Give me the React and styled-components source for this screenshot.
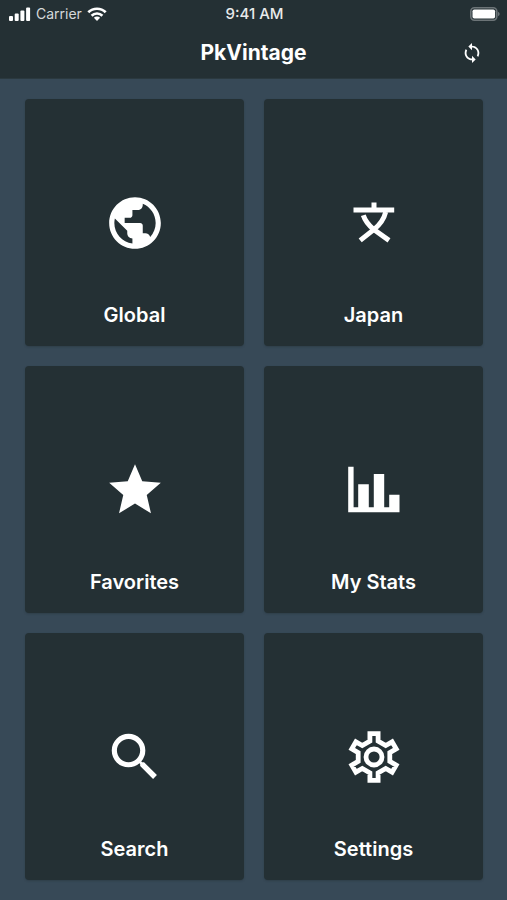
import React from 'react';
import styled, { createGlobalStyle } from 'styled-components';
import { MdPublic, MdStar, MdSearch, MdSync } from 'react-icons/md';

const GlobalStyle = createGlobalStyle`
  body {
    margin: 0;
    background: #374957;
    font-family: 'Inter', 'Liberation Sans', sans-serif;
  }
`;

const Container = styled.div`
  min-height: 100vh;
  display: flex;
  flex-direction: column;
  background: #374957;
  color: #fff;
`;

// Header

const Header = styled.header`
  background: #243034;
  border-bottom: 1px solid #2b393f;
`;

const StatusBar = styled.div`
  display: grid;
  grid-template-columns: 1fr auto 1fr;
  align-items: center;
  height: 28px;
  padding: 0 7px 0 9px;
  font-size: 14px;
  line-height: 20px;
`;

const Carrier = styled.div`
  display: flex;
  align-items: center;
  gap: 5px;
  color: #d5d9da;
`;

const Time = styled.time`
  font-size: 15px;
  font-weight: 500;
  color: #e8eaeb;
`;

const Battery = styled.div`
  display: flex;
  justify-content: flex-end;
`;

const TitleBar = styled.div`
  display: grid;
  grid-template-columns: 1fr auto 1fr;
  align-items: center;
  height: 50px;
  padding: 0 24px;
`;

const Title = styled.h1`
  grid-column: 2;
  margin: 0;
  font-size: 21px;
  font-weight: 700;
  line-height: 24px;
`;

const SyncButton = styled.button`
  justify-self: end;
  display: flex;
  padding: 0;
  border: 0;
  background: none;
  color: #fff;
  font-size: 22px;
  cursor: pointer;
`;

// Menu

const Menu = styled.main`
  flex: 1;
  display: grid;
  grid-template-columns: 1fr 1fr;
  grid-auto-rows: 1fr;
  gap: 20px;
  padding: 20px 24px 20px 25px;
`;

const Card = styled.button`
  display: grid;
  grid-template-rows: 1fr auto 1fr;
  justify-items: center;
  padding: 0;
  border: 0;
  border-radius: 4px;
  background: #243034;
  box-shadow: 0 1px 2px rgba(36, 48, 52, 0.4);
  color: #fff;
  font-family: inherit;
  cursor: pointer;

  svg {
    grid-row: 2;
    width: 62px;
    height: 62px;
  }
`;

const Label = styled.span`
  grid-row: 3;
  padding-top: 49px;
  font-size: 20px;
  font-weight: 600;
  line-height: 24px;
`;

const SignalIcon = () => (
  <svg width="22" height="14" viewBox="0 0 22 14" fill="#fff" aria-hidden="true">
    <rect x="0" y="9" width="4" height="5" rx="1" />
    <rect x="5.7" y="6.5" width="4" height="7.5" rx="1" />
    <rect x="11.4" y="3.5" width="4" height="10.5" rx="1" />
    <rect x="17.1" y="0.5" width="4" height="13.5" rx="1" />
  </svg>
);

const WifiIcon = () => (
  <svg width="20" height="14" viewBox="0 0 20 14" aria-hidden="true">
    <g fill="none" stroke="#fff" strokeWidth="2.7">
      <path d="M1.3 5.3a12.4 12.4 0 0 1 17.4 0" />
      <path d="M4.6 8.7a7.7 7.7 0 0 1 10.8 0" />
    </g>
    <path fill="#fff" d="M10 13.9 6.9 10.8a4.4 4.4 0 0 1 6.2 0z" />
  </svg>
);

const BatteryIcon = () => (
  <svg width="30" height="14" viewBox="0 0 30 14" aria-hidden="true">
    <rect x="0.8" y="0.8" width="26" height="12.4" rx="3.6" fill="none" stroke="#6c7477" strokeWidth="1.6" />
    <rect x="2.5" y="2.5" width="22.6" height="9" rx="1.8" fill="#fff" />
    <path d="M28 4.7q1.7.7 1.7 2.3T28 9.3z" fill="#6c7477" />
  </svg>
);

const JapanIcon = () => (
  <svg viewBox="0 0 62 62" aria-hidden="true">
    <path fill="currentColor" d="M28.5 10.5h5v5h17.7v5H10.5v-5h18z" />
    <g fill="none" stroke="currentColor" strokeWidth="5">
      <path d="M20.3 23.2C22 28.5 25.5 33 30.8 37.6L46 48.4" />
      <path d="M42.7 20C41 27 37 32.7 30.8 37.6L17.2 48.4" />
    </g>
  </svg>
);

const StatsIcon = () => (
  <svg viewBox="0 0 62 62" aria-hidden="true">
    <path
      fill="currentColor"
      d="M5.2 7.7h5.4v40.6h4.6v-23h10.6v23h5V15h10.4v33.3h5V35.7h10.3v17.6H5.2z"
    />
  </svg>
);

const SettingsIcon = () => (
  <svg viewBox="-31 -31 62 62" aria-hidden="true">
    <g fill="none" stroke="currentColor" strokeWidth="4.8">
      <path
        d="M-4.1-15.9-4.1-23.3 4.1-23.3 4.1-15.9 11.7-11.5 18.1-15.2 22.2-8.1 15.8-4.4
          15.8 4.4 22.2 8.1 18.1 15.2 11.7 11.5 4.1 15.9 4.1 23.3-4.1 23.3-4.1 15.9
          -11.7 11.5-18.1 15.2-22.2 8.1-15.8 4.4-15.8-4.4-22.2-8.1-18.1-15.2-11.7-11.5z"
      />
      <circle r="8" />
    </g>
  </svg>
);

const menuItems = [
  { name: 'Global', Icon: MdPublic },
  { name: 'Japan', Icon: JapanIcon },
  { name: 'Favorites', Icon: MdStar },
  { name: 'My Stats', Icon: StatsIcon },
  { name: 'Search', Icon: MdSearch },
  { name: 'Settings', Icon: SettingsIcon },
];

function App() {
  return (
    <Container>
      <GlobalStyle />
      <Header>
        <StatusBar>
          <Carrier>
            <SignalIcon />
            Carrier
            <WifiIcon />
          </Carrier>
          <Time>9:41 AM</Time>
          <Battery>
            <BatteryIcon />
          </Battery>
        </StatusBar>
        <TitleBar>
          <Title>PkVintage</Title>
          <SyncButton type="button" aria-label="Sync">
            <MdSync />
          </SyncButton>
        </TitleBar>
      </Header>
      <Menu>
        {menuItems.map(({ name, Icon }) => (
          <Card key={name} type="button">
            <Icon />
            <Label>{name}</Label>
          </Card>
        ))}
      </Menu>
    </Container>
  );
}

export default App;
